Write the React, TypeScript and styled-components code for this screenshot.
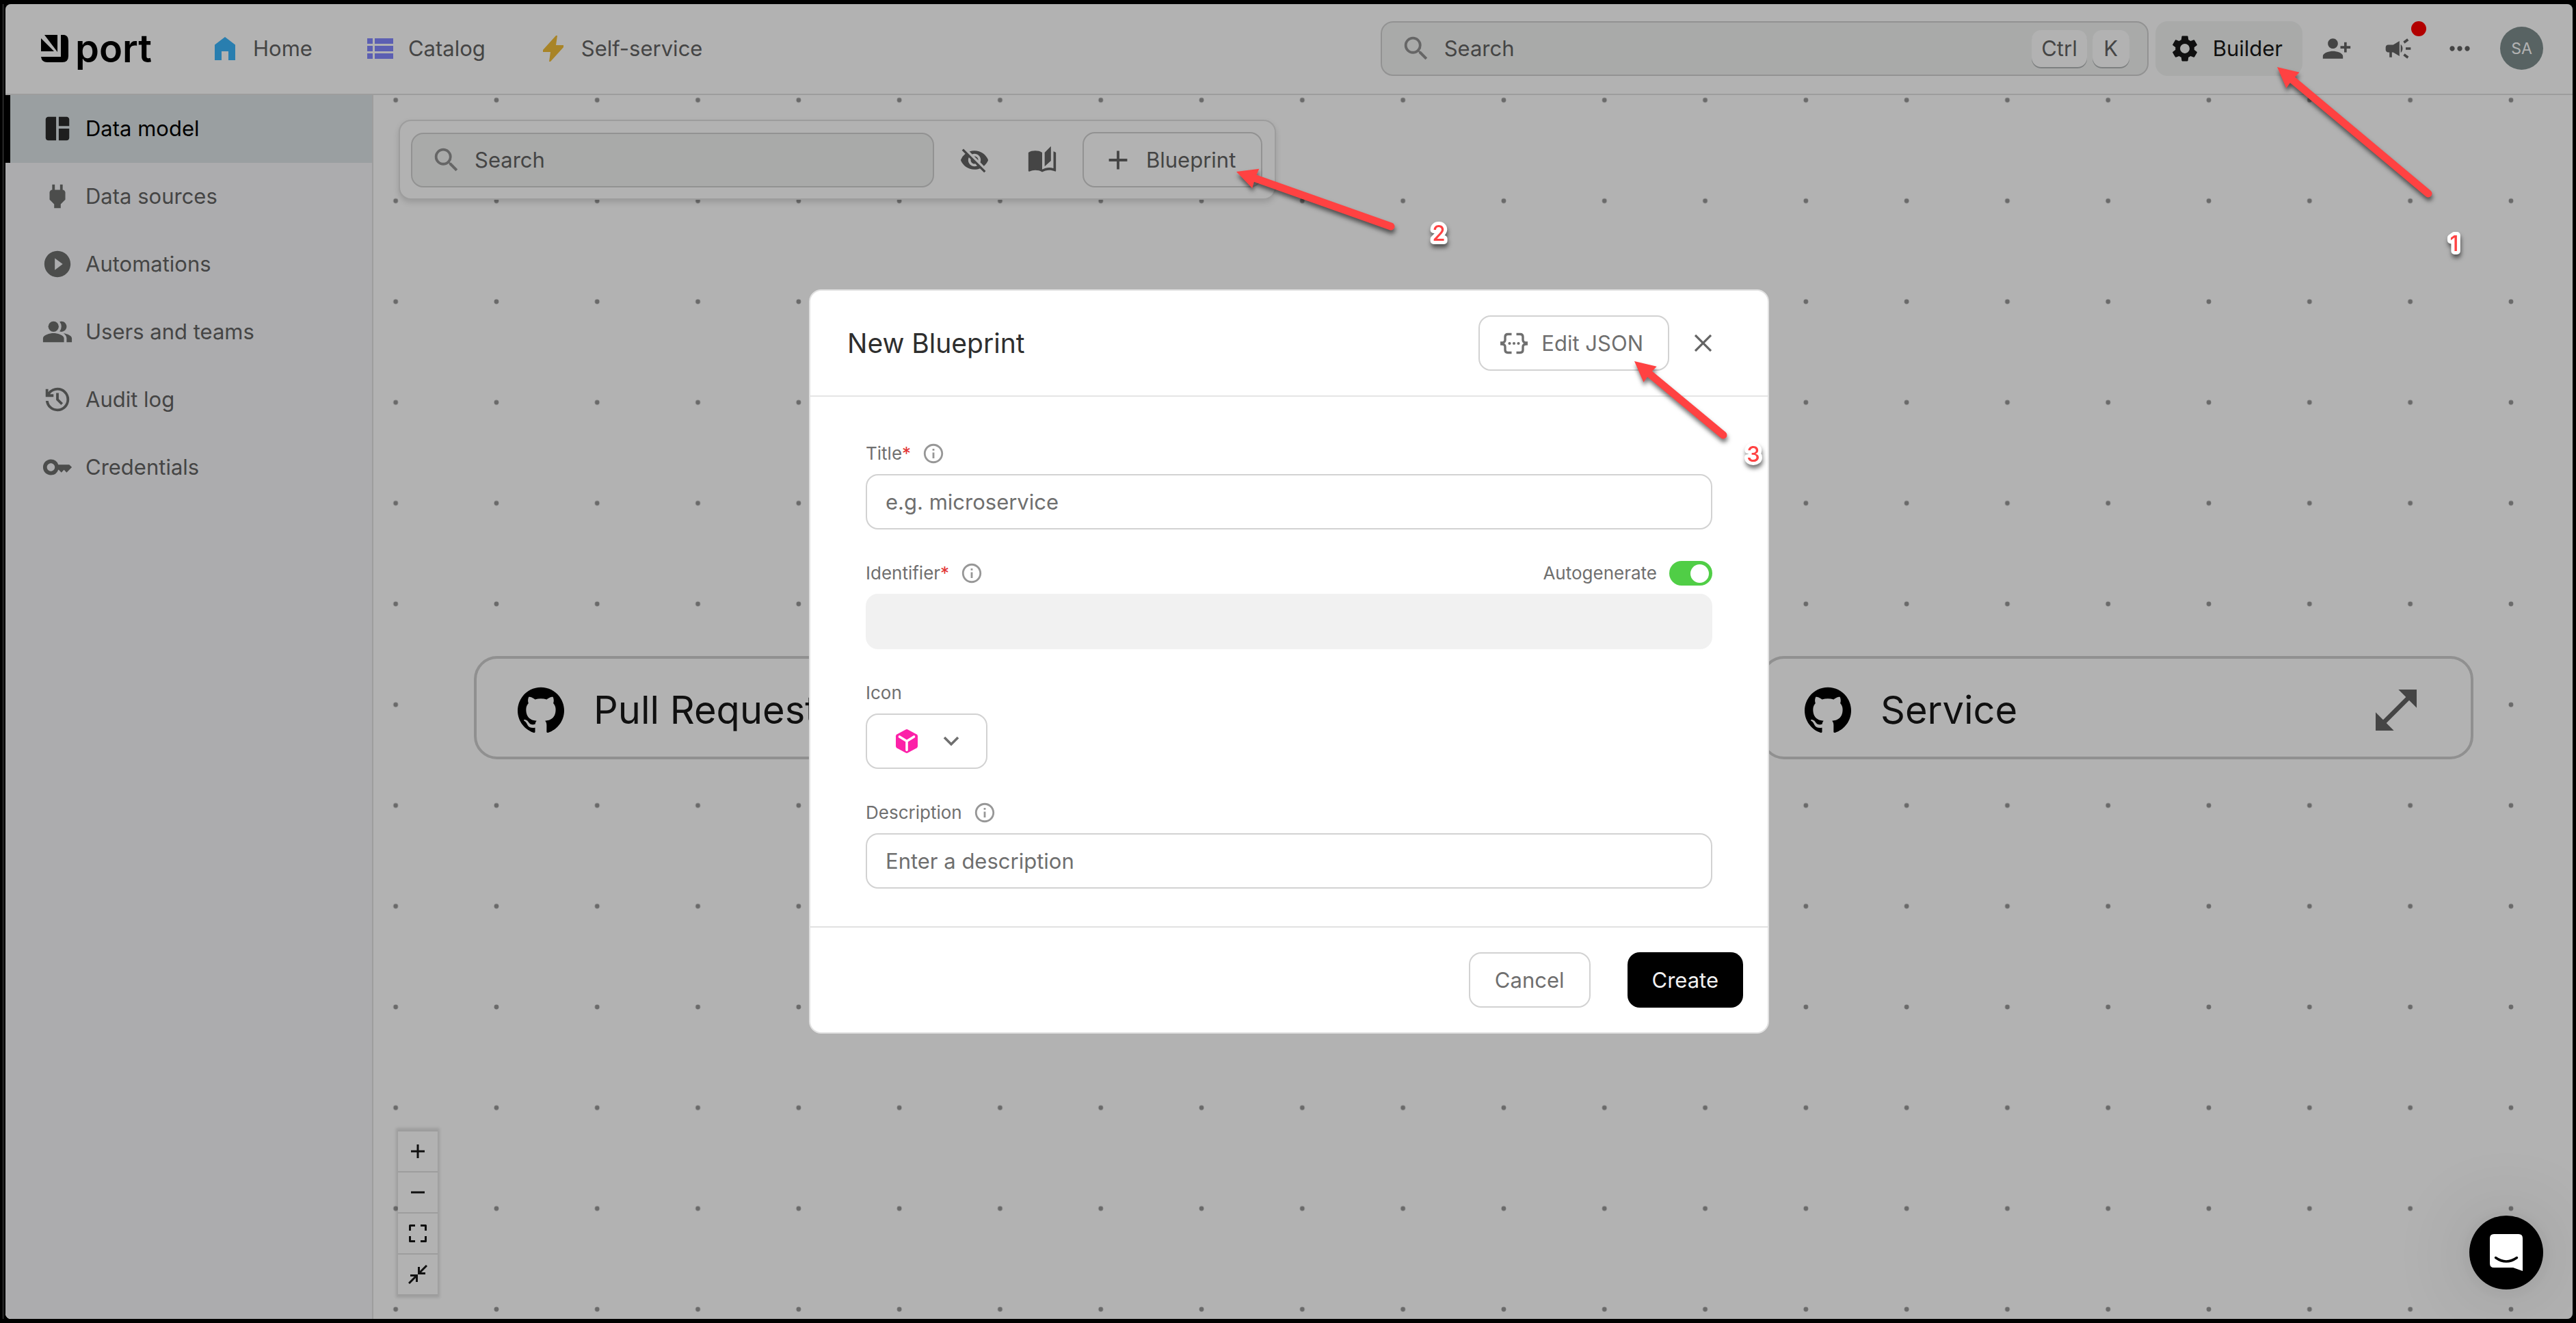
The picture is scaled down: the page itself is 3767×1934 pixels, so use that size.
import React from "react";
import styled, { createGlobalStyle, css } from "styled-components";
import {
  MdAdd,
  MdAutoStories,
  MdCampaign,
  MdInfoOutline,
  MdKey,
  MdMoreHoriz,
  MdOpenInFull,
  MdPeopleAlt,
  MdPersonAddAlt1,
  MdPlayCircleFilled,
  MdPower,
  MdSearch,
  MdSettings,
  MdSpaceDashboard,
  MdVisibilityOff,
} from "react-icons/md";
import { SiGithub } from "react-icons/si";

const color = {
  ink: "#181818",
  text: "#646464",
  muted: "#6f6f6f",
  icon: "#6d6f6e",
  line: "#e1e1e1",
  field: "#d2d2d2",
  fill: "#f2f4f3",
  mark: "#ff4242",
};

const GlobalStyle = createGlobalStyle`
  * { box-sizing: border-box; }
  body {
    margin: 0;
    background: #000;
    color: ${color.text};
    font-family: Inter, "Liberation Sans", sans-serif;
    font-size: 31px;
    font-weight: 400;
    line-height: 40px;
  }
  button, input { font: inherit; color: inherit; }
  button { margin: 0; padding: 0; border: 0; background: none; cursor: pointer; }
  a { color: inherit; text-decoration: none; }
  svg { display: block; flex: none; }
`;

/* ---------- Frame ---------- */

const Desktop = styled.div`
  min-height: 100vh;
  padding: 6px 5px 6px 4px;
  display: flex;
`;

const Window = styled.div`
  position: relative;
  flex: 1;
  min-width: 0;
  display: flex;
  border-left: 1px solid #4a4a4a;
  padding-left: 3px;
`;

const Page = styled.div`
  position: relative;
  flex: 1;
  min-width: 0;
  display: flex;
  flex-direction: column;
  background: #fff;
  border-radius: 8px;
  overflow: hidden;
`;

/* ---------- Header ---------- */

const Header = styled.header`
  display: flex;
  align-items: center;
  height: 133px;
  padding: 0 43px 2px 52px;
  border-bottom: 2px solid ${color.line};
`;

const Logo = styled.a`
  display: flex;
  align-items: center;
  gap: 10px;
  margin-right: 84px;
  color: #000;
  font-size: 56px;
  font-weight: 600;
`;

const Nav = styled.nav`
  display: flex;
  gap: 76px;
  flex: 1;
`;

const NavLink = styled.a`
  display: flex;
  align-items: center;
  gap: 18px;
`;

const SearchBox = styled.label<{ $width: number }>`
  display: flex;
  align-items: center;
  gap: 18px;
  flex: 0 1 ${(p) => p.$width}px;
  width: ${(p) => p.$width}px;
  height: 80px;
  padding: 0 26px 0 27px;
  border: 2px solid ${color.field};
  border-radius: 18px;
  background: ${color.fill};
  color: #939393;

  input {
    flex: 1;
    min-width: 0;
    padding: 0;
    border: 0;
    outline: 0;
    background: none;
    color: ${color.text};
  }
  input::placeholder { color: ${color.text}; opacity: 1; }
`;

const Keys = styled.span`
  display: flex;
  gap: 8px;
`;

const Key = styled.kbd`
  min-width: 54px;
  padding: 7px 14px;
  border-radius: 14px;
  background: #fff;
  box-shadow: 0 2px 0 #b4b8b8;
  color: ${color.text};
  font: inherit;
  text-align: center;
`;

const BuilderButton = styled.button`
  display: flex;
  align-items: center;
  gap: 18px;
  height: 80px;
  margin-left: 10px;
  padding: 0 29px 0 20px;
  border-radius: 18px;
  background: ${color.fill};
  color: ${color.ink};
`;

const HeaderIcons = styled.div`
  display: flex;
  align-items: center;
  gap: 46px;
  margin: 0 37px 0 28px;
`;

const IconButton = styled.button`
  position: relative;
  color: ${color.text};
`;

const Unread = styled.span`
  position: absolute;
  top: -18px;
  right: -19px;
  width: 22px;
  height: 22px;
  border-radius: 50%;
  background: #ff0000;
`;

const Avatar = styled.button`
  width: 63px;
  height: 63px;
  border-radius: 50%;
  background: #7f8f8f;
  color: #fff;
  font-size: 23px;
`;

/* ---------- Sidebar ---------- */

const Main = styled.div`
  display: flex;
  flex: 1;
  min-height: 0;
`;

const Sidebar = styled.nav`
  flex: none;
  width: 538px;
  border-right: 2px solid ${color.line};
  background: #f6f7fa;
`;

const SideLink = styled.a<{ $active?: boolean }>`
  display: flex;
  align-items: center;
  gap: 18px;
  height: 99px;
  padding: 0 0 2px 46px;
  border-left: 7px solid transparent;

  svg { color: ${color.icon}; }

  ${(p) =>
    p.$active &&
    css`
      border-left-color: #000;
      background: #dde4e7;
      color: #000;
      svg { color: #2b2b2b; }
    `}
`;

/* ---------- Canvas ---------- */

const Canvas = styled.main`
  position: relative;
  flex: 1;
  min-width: 0;
`;

const Grid = styled.svg`
  position: absolute;
  inset: 0;
  width: 100%;
  height: 100%;
`;

const Toolbar = styled.div`
  position: absolute;
  left: 37px;
  top: 36px;
  display: flex;
  align-items: center;
  gap: 19px;
  padding: 16px 18px 16px 16px;
  border: 2px solid ${color.line};
  border-radius: 18px;
  background: #fff;
  box-shadow: 0 4px 8px rgba(0, 0, 0, 0.14);
`;

const ToolButton = styled.button`
  display: grid;
  place-items: center;
  width: 80px;
  height: 80px;
`;

const OutlineButton = styled.button<{ $pad: string; $gap?: number }>`
  display: flex;
  align-items: center;
  justify-content: center;
  gap: ${(p) => p.$gap ?? 18}px;
  height: 81px;
  padding: ${(p) => p.$pad};
  border: 2px solid ${color.field};
  border-radius: 18px;
  background: #fff;
`;

const Node = styled.article<{ $x: number; $y: number }>`
  position: absolute;
  left: ${(p) => p.$x}px;
  top: ${(p) => p.$y}px;
  display: flex;
  align-items: center;
  width: 1042px;
  height: 151px;
  padding: 6px 69px 0 60px;
  border: 4px solid #cecece;
  border-radius: 34px;
  background: #fff;
  color: ${color.ink};
`;

const NodeTitle = styled.h2`
  flex: 1;
  margin: 0 0 0 43px;
  font-size: 56px;
  font-weight: 400;
  line-height: 72px;
`;

const Controls = styled.div`
  position: absolute;
  left: 36px;
  bottom: 34px;
  display: grid;
  grid-auto-rows: 60px;
  border-top: 2px solid ${color.line};
  box-shadow: 0 0 4px 3px rgba(0, 0, 0, 0.12);

  button {
    display: grid;
    place-items: center;
    width: 58px;
    border-bottom: 2px solid ${color.line};
    background: #fff;
    color: ${color.ink};
  }
`;

/* ---------- Dialog ---------- */

const Scrim = styled.div`
  position: absolute;
  inset: 0;
  display: flex;
  align-items: center;
  justify-content: center;
  background: rgba(0, 0, 0, 0.3);
`;

const Dialog = styled.section`
  width: 1404px;
  border: 2px solid ${color.line};
  border-radius: 18px;
  background: #fff;
  color: ${color.muted};
`;

const DialogHeader = styled.header`
  display: flex;
  align-items: center;
  gap: 37px;
  height: 155px;
  padding: 0 82px 0 54px;
  border-bottom: 2px solid #e5e5e5;

  h1 {
    flex: 1;
    margin: 0;
    color: #2e2e2e;
    font-size: 39px;
    font-weight: 400;
    line-height: 48px;
  }
`;

const Fields = styled.form`
  display: grid;
  gap: 47px;
  padding: 66px 81px 55px;
`;

const Field = styled.div`
  display: grid;
  gap: 13px;
  justify-items: start;
`;

const LabelRow = styled.div`
  display: flex;
  align-items: center;
  gap: 16px;
  width: 100%;
  height: 34px;
  font-size: 26px;
  line-height: 34px;

  svg { color: #979797; }
`;

const Required = styled.span`
  color: #e23434;
`;

const TextInput = styled.input`
  width: 100%;
  height: 81px;
  padding: 0 27px;
  border: 2px solid ${color.field};
  border-radius: 18px;
  background: #fff;

  &::placeholder { color: ${color.muted}; opacity: 1; }
  &:disabled { border-color: #f1f1f1; background: #f1f1f1; }
`;

const Toggle = styled.label`
  display: flex;
  align-items: center;
  gap: 18px;
  margin-left: auto;

  input {
    appearance: none;
    width: 63px;
    height: 36px;
    margin: 0;
    padding: 0 5px;
    display: flex;
    align-items: center;
    border-radius: 18px;
    background: #c4c4c4;
  }
  input::before {
    content: "";
    width: 27px;
    height: 27px;
    border-radius: 50%;
    background: #fff;
  }
  input:checked { justify-content: flex-end; background: #50ce46; }
`;

const DialogFooter = styled.footer`
  display: flex;
  align-items: center;
  justify-content: flex-end;
  gap: 54px;
  height: 155px;
  padding: 0 36px;
  border-top: 2px solid ${color.line};
`;

const PrimaryButton = styled.button`
  height: 81px;
  padding: 0 36px;
  border-radius: 18px;
  background: #000;
  color: #f0f0f0;
`;

/* ---------- Overlays ---------- */

const Chat = styled.button`
  position: absolute;
  right: 43px;
  bottom: 43px;
  display: grid;
  place-items: center;
  width: 108px;
  height: 108px;
  border-radius: 50%;
  background: #000;
  box-shadow: 0 4px 120px rgba(0, 0, 0, 0.16), 0 2px 20px rgba(0, 0, 0, 0.06);
`;

const Marks = styled.svg`
  position: absolute;
  inset: 0;
  width: 100%;
  height: 100%;
  pointer-events: none;
  filter: drop-shadow(1px 5px 3px rgba(0, 0, 0, 0.55));

  text {
    font-size: 31px;
    font-weight: 500;
    text-anchor: middle;
    fill: ${color.mark};
    stroke: #fff;
    stroke-width: 10px;
    stroke-linejoin: round;
    paint-order: stroke;
  }
`;

/* ---------- Drawings ---------- */

const LogoMark = () => (
  <svg width="40" height="40" viewBox="0 0 40 40" fill="#000" aria-hidden="true">
    <path d="M5 0H24V25Z" />
    <path d="M0 5L19 24H0Z" />
    <path d="M29 0H34Q40 1 40 9V31Q40 40 31 40H9Q1 40 0 32H29Z" />
  </svg>
);

const HomeIcon = () => (
  <svg width="46" height="46" viewBox="0 0 46 46" fill="#3cb5fb" aria-hidden="true">
    <path d="M23 6L38 17.500V40H28V27H18V40H8V17.500Z" />
  </svg>
);

const CatalogIcon = () => (
  <svg width="46" height="46" viewBox="0 0 46 46" fill="#8488ff" aria-hidden="true">
    {[8, 19, 30].map((y) => (
      <g key={y}>
        <rect x="4" y={y} width="8" height="8" />
        <rect x="15" y={y} width="27" height="8" />
      </g>
    ))}
  </svg>
);

const BoltIcon = () => (
  <svg width="46" height="46" viewBox="0 0 46 46" fill="#f1bd39" aria-hidden="true">
    <path d="M27 4H29L27 18H38V21L19 42H17L19 28H8V25Z" />
  </svg>
);

const HistoryIcon = () => (
  <svg width="46" height="46" viewBox="0 0 24 24" fill="currentColor" aria-hidden="true">
    <path d="M12 21q-3.450 0-6.012-2.287T3.050 13H5.100q.35 2.600 2.313 4.300T12 19q2.925 0 4.963-2.037T19 12t-2.037-4.962T12 5q-1.725 0-3.225.8T6.250 8H9v2H3V4h2v2.350q1.275-1.600 3.113-2.475T12 3q1.875 0 3.513.713t2.850 1.924t1.925 2.850T21 12t-.712 3.513t-1.925 2.850t-2.850 1.925T12 21m2.800-4.800L11 12.400V7h2v4.600l3.200 3.200z" />
  </svg>
);

const BracesIcon = () => (
  <svg width="40" height="40" viewBox="0 0 40 40" fill="none" stroke="currentColor" strokeWidth="3.400" aria-hidden="true">
    <path d="M16.500 6.500H11Q7 6.500 7 10.500V15Q7 19 1.500 19V21Q7 21 7 25V29.500Q7 33.500 11 33.500H16.500" />
    <path d="M23.500 6.500H29Q33 6.500 33 10.500V15Q33 19 38.500 19V21Q33 21 33 25V29.500Q33 33.500 29 33.500H23.500" />
    <g fill="currentColor" stroke="none">
      <circle cx="13.500" cy="20" r="2.100" />
      <circle cx="20" cy="20" r="2.100" />
      <circle cx="26.500" cy="20" r="2.100" />
    </g>
  </svg>
);

const CloseIcon = () => (
  <svg width="25" height="25" viewBox="0 0 25 25" stroke="currentColor" strokeWidth="3.200" aria-hidden="true">
    <path d="M1 1L24 24M24 1L1 24" />
  </svg>
);

const CubeIcon = () => (
  <svg width="34" height="37" viewBox="0 0 34 37" aria-hidden="true">
    <path
      d="M15.500 1.400Q17 .6 18.500 1.400L31.500 8.600Q33 9.500 33 11.200V25.800Q33 27.500 31.500 28.400L18.500 35.600Q17 36.400 15.500 35.600L2.500 28.400Q1 27.500 1 25.800V11.200Q1 9.500 2.500 8.600Z"
      fill="#fc21a8"
    />
    <path d="M6.500 12L17 18.500L27.500 12M17 18.500V31.500" stroke="#fff" strokeWidth="3.600" strokeLinecap="round" fill="none" />
  </svg>
);

const ChevronIcon = () => (
  <svg width="24" height="16" viewBox="0 0 24 16" fill="none" stroke="currentColor" strokeWidth="3.600" aria-hidden="true">
    <path d="M2 2L12 12L22 2" />
  </svg>
);

const ControlIcon = ({ d, round }: { d: string; round?: boolean }) => (
  <svg
    width="28"
    height="28"
    viewBox="0 0 28 28"
    fill="none"
    stroke="currentColor"
    strokeWidth="3"
    strokeLinejoin={round ? "round" : "miter"}
    aria-hidden="true"
  >
    <path d={d} />
  </svg>
);

const ChatIcon = () => (
  <svg width="48" height="54" viewBox="0 0 48 54" aria-hidden="true">
    <path d="M6 0H42Q48 0 48 6V54L34 49H6Q0 49 0 43V6Q0 0 6 0Z" fill="#fff" />
    <path d="M8.500 34.500Q24 45.500 39.500 34.500" stroke="#000" strokeWidth="3.400" strokeLinecap="round" fill="none" />
  </svg>
);

/* An arrow whose head sits at `to` and whose round tail ends at `from`. */
type Point = [number, number];
const Arrow = ({ from, to }: { from: Point; to: Point }) => {
  const dx = from[0] - to[0];
  const dy = from[1] - to[1];
  const length = Math.hypot(dx, dy);
  const angle = (Math.atan2(dy, dx) * 180) / Math.PI;
  return (
    <g transform={`translate(${to[0]} ${to[1]}) rotate(${angle})`} fill={color.mark}>
      <path d="M0 0L30 -15L29 0L30 15Z" />
      <path d={`M26 0H${length}`} stroke={color.mark} strokeWidth="11" strokeLinecap="round" />
    </g>
  );
};

/* ---------- Screen ---------- */

const Info = () => <MdInfoOutline size={34} aria-hidden="true" />;

const sections = [
  { label: "Data model", icon: <MdSpaceDashboard size={46} />, active: true },
  { label: "Data sources", icon: <MdPower size={46} /> },
  { label: "Automations", icon: <MdPlayCircleFilled size={46} /> },
  { label: "Users and teams", icon: <MdPeopleAlt size={46} /> },
  { label: "Audit log", icon: <HistoryIcon /> },
  { label: "Credentials", icon: <MdKey size={46} /> },
];

const blueprints = [
  { title: "Pull Request", x: 147, y: 820 },
  { title: "Service", x: 2029, y: 820 },
];

export default function App() {
  return (
    <>
      <GlobalStyle />
      <Desktop>
        <Window>
          <Page>
            <Header>
              <Logo href="#">
                <LogoMark />
                port
              </Logo>
              <Nav>
                <NavLink href="#home"><HomeIcon />Home</NavLink>
                <NavLink href="#catalog"><CatalogIcon />Catalog</NavLink>
                <NavLink href="#self-service"><BoltIcon />Self-service</NavLink>
              </Nav>
              <SearchBox $width={1123}>
                <MdSearch size={46} />
                <input type="search" placeholder="Search" aria-label="Search" />
                <Keys><Key>Ctrl</Key><Key>K</Key></Keys>
              </SearchBox>
              <BuilderButton><MdSettings size={46} />Builder</BuilderButton>
              <HeaderIcons>
                <IconButton aria-label="Invite"><MdPersonAddAlt1 size={44} /></IconButton>
                <IconButton aria-label="News"><MdCampaign size={44} /><Unread /></IconButton>
                <IconButton aria-label="More"><MdMoreHoriz size={44} /></IconButton>
              </HeaderIcons>
              <Avatar>SA</Avatar>
            </Header>

            <Main>
              <Sidebar>
                {sections.map((s) => (
                  <SideLink key={s.label} href="#" $active={s.active}>
                    {s.icon}
                    {s.label}
                  </SideLink>
                ))}
              </Sidebar>

              <Canvas>
                <Grid aria-hidden="true">
                  <defs>
                    <pattern id="dots" x="-41" y="-66.300" width="147.300" height="147.300" patternUnits="userSpaceOnUse">
                      <circle cx="73.650" cy="73.650" r="3.400" fill="#999" />
                    </pattern>
                  </defs>
                  <rect width="100%" height="100%" fill="url(#dots)" />
                </Grid>

                {blueprints.map((b) => (
                  <Node key={b.title} $x={b.x} $y={b.y}>
                    <SiGithub size={68} color="#000" />
                    <NodeTitle>{b.title}</NodeTitle>
                    <IconButton aria-label={`Expand ${b.title}`}><MdOpenInFull size={80} /></IconButton>
                  </Node>
                ))}

                <Toolbar>
                  <SearchBox $width={765}>
                    <MdSearch size={46} />
                    <input type="search" placeholder="Search" aria-label="Search blueprints" />
                  </SearchBox>
                  <ToolButton aria-label="Hide"><MdVisibilityOff size={44} /></ToolButton>
                  <ToolButton aria-label="Guide"><MdAutoStories size={44} /></ToolButton>
                  <OutlineButton $pad="0 37px 0 27px"><MdAdd size={46} />Blueprint</OutlineButton>
                </Toolbar>

                <Controls>
                  <button aria-label="Zoom in"><ControlIcon d="M14 4V24M4 14H24" /></button>
                  <button aria-label="Zoom out"><ControlIcon d="M4 14H24" /></button>
                  <button aria-label="Fit view">
                    <ControlIcon round d="M2.500 10V2.500H10M18 2.500H25.500V10M25.500 18V25.500H18M10 25.500H2.500V18" />
                  </button>
                  <button aria-label="Collapse">
                    <ControlIcon d="M27 1L16 12M15.500 3V12.500H25M1 27L12 16M3 15.500H12.500V25" />
                  </button>
                </Controls>
              </Canvas>
            </Main>

            <Scrim>
              <Dialog role="dialog" aria-labelledby="dialog-title">
                <DialogHeader>
                  <h1 id="dialog-title">New Blueprint</h1>
                  <OutlineButton $pad="0 36px 0 30px" $gap={20}><BracesIcon />Edit JSON</OutlineButton>
                  <IconButton aria-label="Close"><CloseIcon /></IconButton>
                </DialogHeader>
                <Fields id="blueprint">
                  <Field>
                    <LabelRow>
                      <label htmlFor="title">Title<Required>*</Required></label>
                      <Info />
                    </LabelRow>
                    <TextInput id="title" placeholder="e.g. microservice" />
                  </Field>
                  <Field>
                    <LabelRow>
                      <label htmlFor="identifier">Identifier<Required>*</Required></label>
                      <Info />
                      <Toggle>
                        Autogenerate
                        <input type="checkbox" role="switch" defaultChecked />
                      </Toggle>
                    </LabelRow>
                    <TextInput id="identifier" disabled />
                  </Field>
                  <Field>
                    <LabelRow><label htmlFor="icon">Icon</label></LabelRow>
                    <OutlineButton id="icon" type="button" aria-haspopup="listbox" $pad="0 39px 0 41px" $gap={36}>
                      <CubeIcon />
                      <ChevronIcon />
                    </OutlineButton>
                  </Field>
                  <Field>
                    <LabelRow>
                      <label htmlFor="description">Description</label>
                      <Info />
                    </LabelRow>
                    <TextInput id="description" placeholder="Enter a description" />
                  </Field>
                </Fields>
                <DialogFooter>
                  <OutlineButton type="button" $pad="0 36px">Cancel</OutlineButton>
                  <PrimaryButton type="submit" form="blueprint">Create</PrimaryButton>
                </DialogFooter>
              </Dialog>
            </Scrim>

            <Chat aria-label="Open chat"><ChatIcon /></Chat>

            <Marks>
              <Arrow from={[3543, 277]} to={[3322, 92]} />
              <Arrow from={[2026, 325]} to={[1800, 245]} />
              <Arrow from={[2512, 630]} to={[2382, 522]} />
              <text x="3581" y="361">1</text>
              <text x="2096" y="346">2</text>
              <text x="2556" y="669">3</text>
            </Marks>
          </Page>
        </Window>
      </Desktop>
    </>
  );
}
